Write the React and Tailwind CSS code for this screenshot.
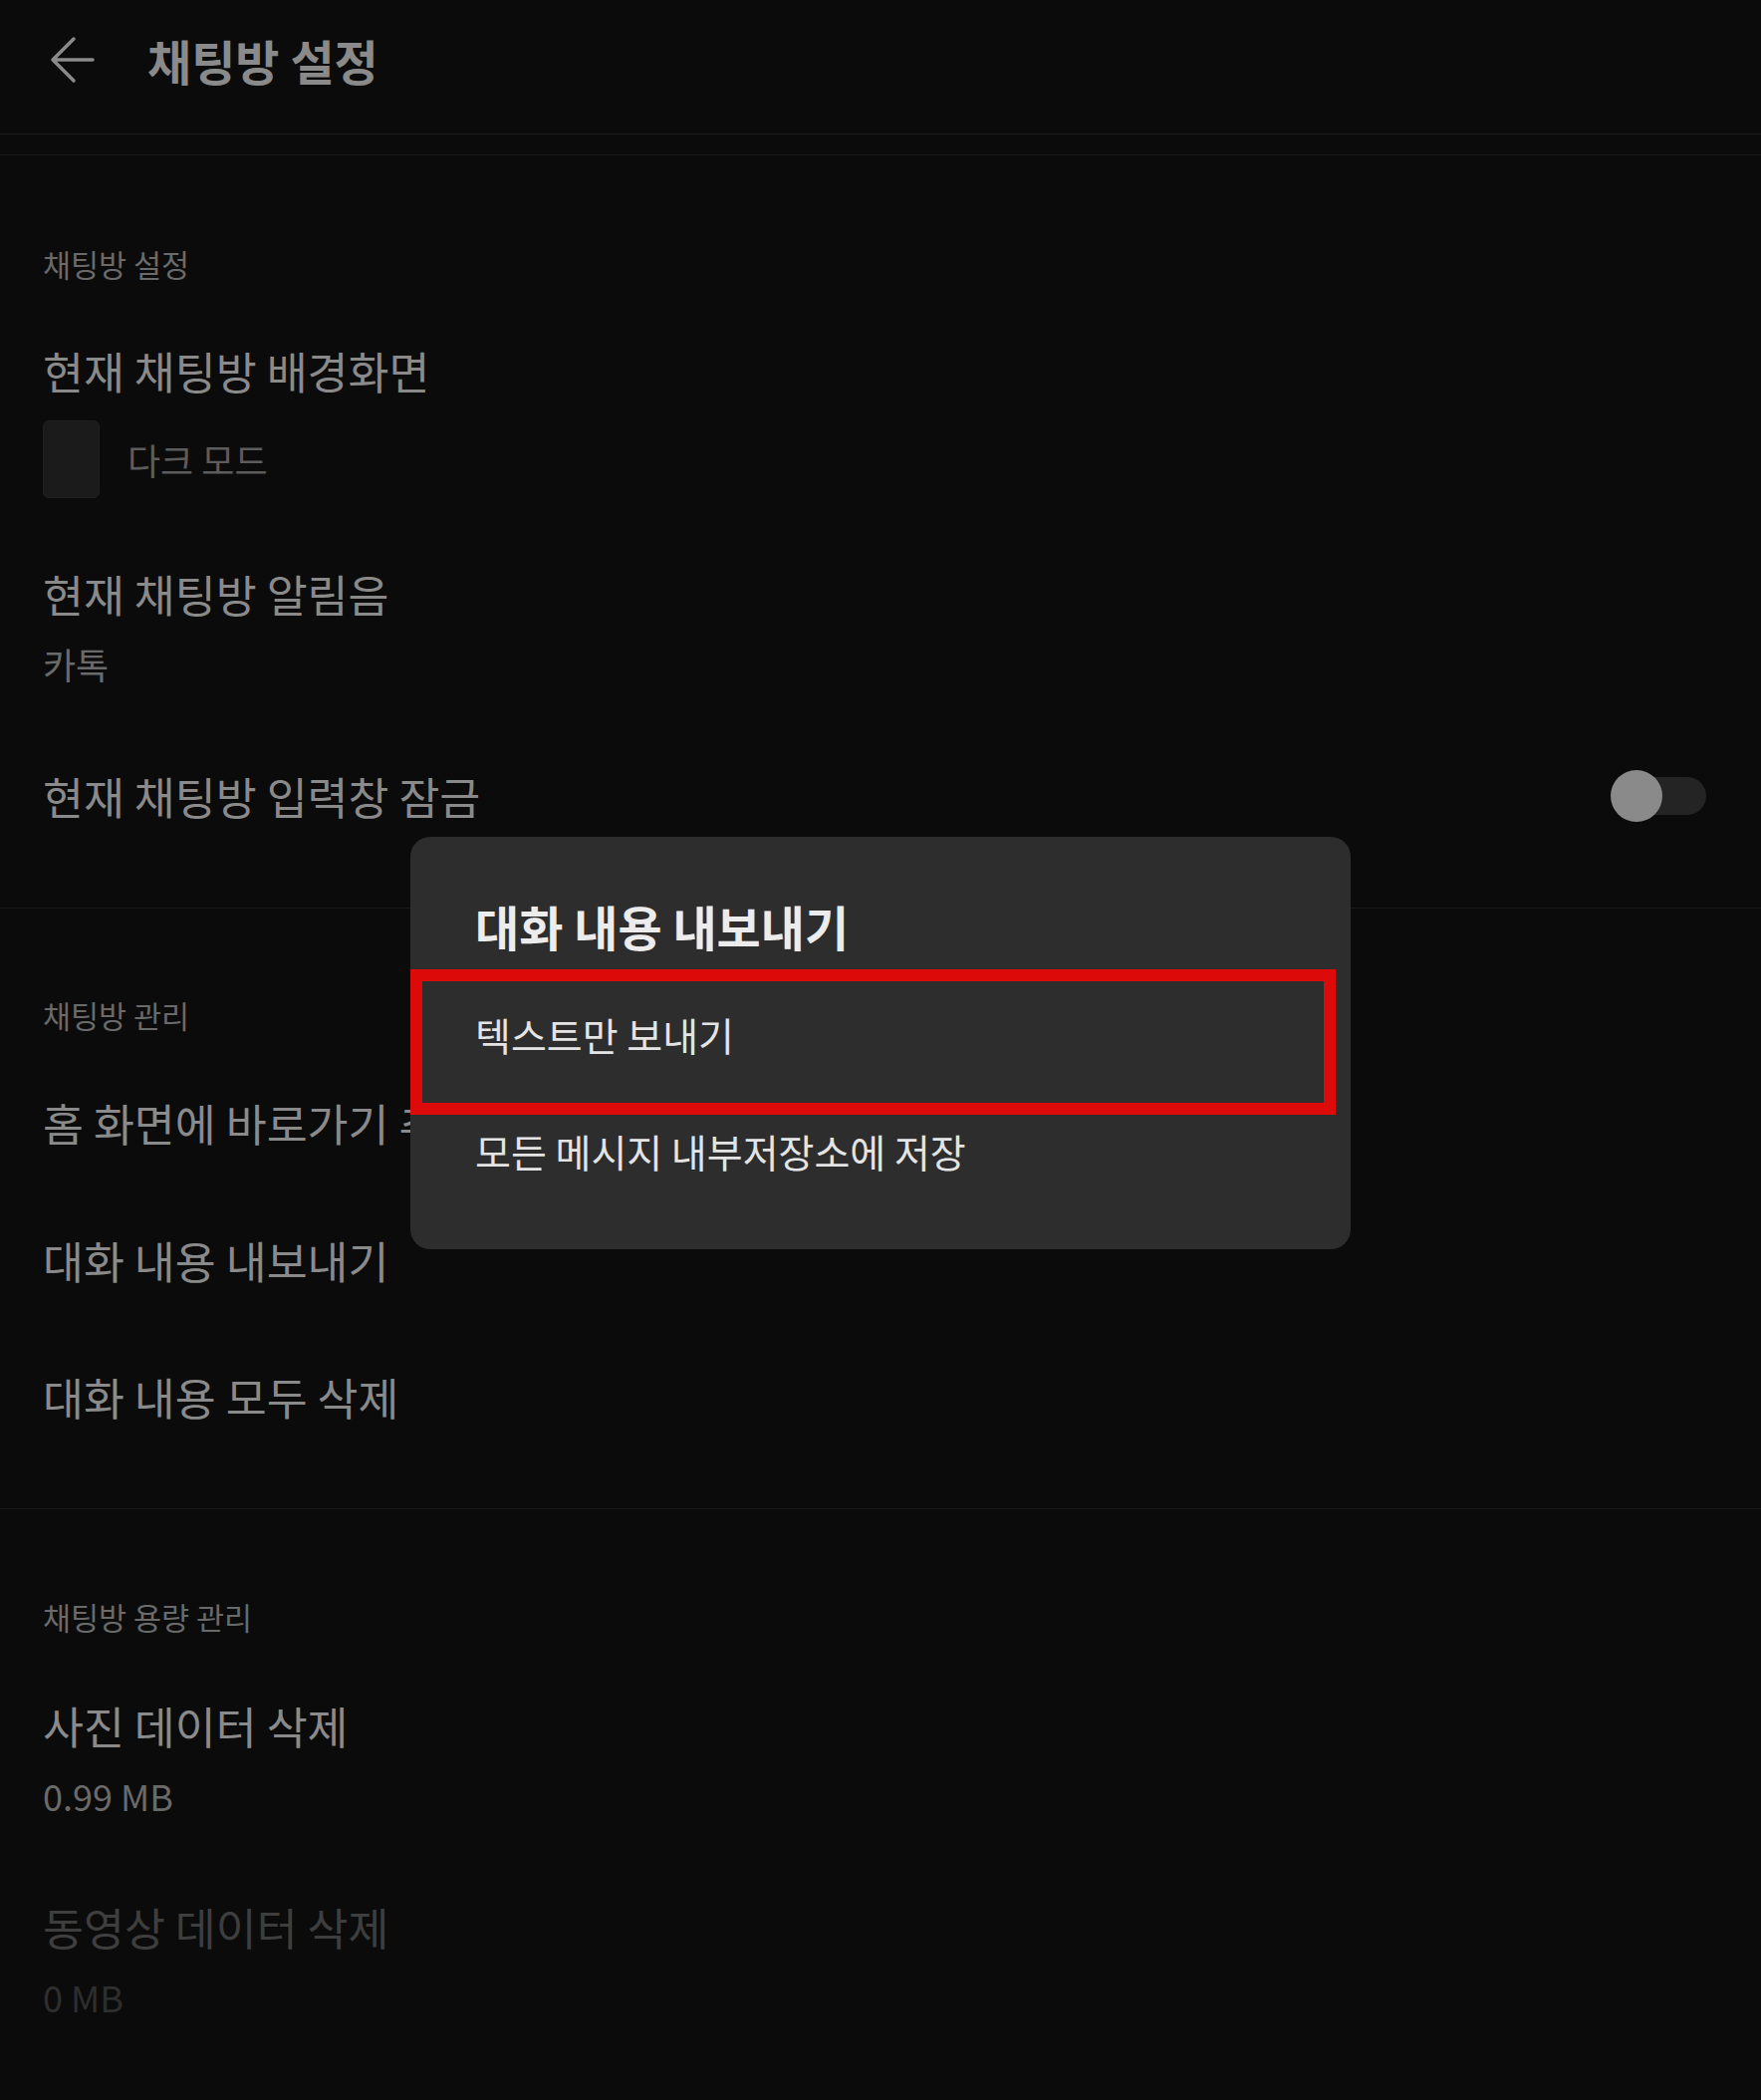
import React from "react";

const font = { fontFamily: '"Noto Sans CJK KR", "Noto Sans", sans-serif' };

function BackArrow() {
  return (
    <svg width="48" height="48" viewBox="0 0 48 48" fill="none">
      <path
        d="M44 24H4M4 24L25 3M4 24L25 45"
        stroke="#8a8a8a"
        strokeWidth="3.5"
        strokeLinecap="round"
        strokeLinejoin="round"
      />
    </svg>
  );
}

function Toggle() {
  return (
    <div className="relative w-[96px] h-[52px] shrink-0">
      <div className="absolute right-0 top-[7px] h-[38px] w-[84px] rounded-full bg-[#242424]" />
      <div className="absolute left-0 top-0 h-[52px] w-[52px] rounded-full bg-[#8a8a8a]" />
    </div>
  );
}

function SectionLabel({ children }) {
  return <div className="text-[30.5px] leading-[40px] text-[#6a6a6a]">{children}</div>;
}

function Item({ title, sub, dim, right, className = "" }) {
  return (
    <div className={`flex items-start justify-between ${className}`}>
      <div>
        <div className={`text-[44.5px] leading-[56px] ${dim ? "text-[#3e3e3e]" : "text-[#8a8a8a]"}`}>
          {title}
        </div>
        {sub && (
          <div className={`mt-[20px] text-[36px] leading-[44px] ${dim ? "text-[#2e2e2e]" : "text-[#6a6a6a]"}`}>
            {sub}
          </div>
        )}
      </div>
      {right}
    </div>
  );
}

export default function App() {
  return (
    <div className="relative w-[1768px] h-[2108px] bg-[#0b0b0b] overflow-hidden" style={font}>
      {/* header */}
      <div className="h-[135px] pb-[14px] flex items-center pl-[49px] border-b border-[#1c1c1c]">
        <BackArrow />
        <div className="ml-[51px] text-[48px] font-bold text-[#8a8a8a]">채팅방 설정</div>
      </div>
      <div className="h-[21px] border-b border-[#171717]" />

      {/* section 1 */}
      <div className="pl-[43px] pr-[55px] pt-[89px] pb-[84px] border-b border-[#1a1a1a]">
        <SectionLabel>채팅방 설정</SectionLabel>
        <Item title="현재 채팅방 배경화면" className="mt-[59px]" />
        <div className="mt-[22px] flex items-center">
          <div className="w-[57px] h-[78px] rounded-[6px] bg-[#1b1b1b] border border-[#202020]" />
          <div className="ml-[28px] text-[36px] leading-[44px] text-[#5c5c5c]">다크 모드</div>
        </div>
        <Item title="현재 채팅방 알림음" sub="카톡" className="mt-[68px]" />
        <div className="mt-[83px] flex items-center justify-between">
          <div className="text-[44.5px] leading-[56px] text-[#8a8a8a]">현재 채팅방 입력창 잠금</div>
          <Toggle />
        </div>
      </div>

      {/* section 2 */}
      <div className="pl-[43px] pr-[55px] pt-[87px] pb-[84px] border-b border-[#1a1a1a]">
        <SectionLabel>채팅방 관리</SectionLabel>
        <Item title="홈 화면에 바로가기 추가" className="mt-[60px]" />
        <Item title="대화 내용 내보내기" className="mt-[82px]" />
        <Item title="대화 내용 모두 삭제" className="mt-[81px]" />
      </div>

      {/* section 3 */}
      <div className="pl-[43px] pr-[55px] pt-[88px]">
        <SectionLabel>채팅방 용량 관리</SectionLabel>
        <Item title="사진 데이터 삭제" sub="0.99 MB" className="mt-[61px]" />
        <Item title="동영상 데이터 삭제" sub="0 MB" dim className="mt-[82px]" />
      </div>

      {/* dialog */}
      <div className="absolute inset-0 flex items-center justify-center">
        <div className="relative -translate-y-[7px] w-[944px] h-[414px] rounded-[20px] bg-[#2d2d2d]">
          <div className="pt-[61px] pl-[65px] text-[48px] leading-[56px] font-bold text-[#ececec]">
            대화 내용 내보내기
          </div>
          <div className="mt-[23px] h-[117px] flex items-center pl-[65px] text-[39px] text-[#e4e4e4]">
            텍스트만 보내기
          </div>
          <div className="h-[117px] flex items-center pl-[65px] text-[39px] text-[#e4e4e4]">
            모든 메시지 내부저장소에 저장
          </div>
          <div className="absolute left-0 top-[133px] w-[929px] h-[146px] border-[12px] border-[#dd0a0a]" />
        </div>
      </div>
    </div>
  );
}
